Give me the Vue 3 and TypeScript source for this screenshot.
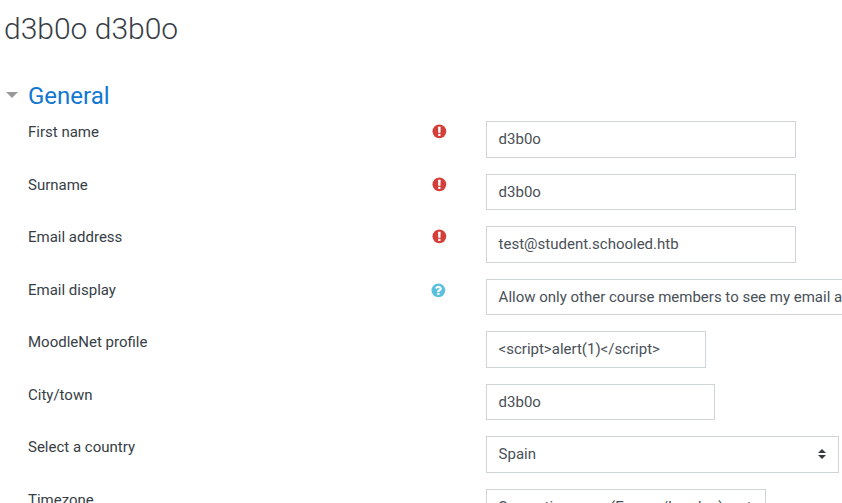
<script setup lang="ts">
interface Field {
  label: string
  value: string
  kind: 'text' | 'select'
  width: number
  mark?: 'required' | 'help'
}

const fields: Field[] = [
  { label: 'First name', value: 'd3b0o', kind: 'text', width: 310, mark: 'required' },
  { label: 'Surname', value: 'd3b0o', kind: 'text', width: 310, mark: 'required' },
  { label: 'Email address', value: 'test@student.schooled.htb', kind: 'text', width: 310, mark: 'required' },
  { label: 'Email display', value: 'Allow only other course members to see my email address', kind: 'select', width: 440, mark: 'help' },
  { label: 'MoodleNet profile', value: '<' + 'script>alert(1)<' + '/script>', kind: 'text', width: 220 },
  { label: 'City/town', value: 'd3b0o', kind: 'text', width: 229 },
  { label: 'Select a country', value: 'Spain', kind: 'select', width: 353 },
  { label: 'Timezone', value: 'Server timezone (Europe/London)', kind: 'select', width: 280 },
]
</script>

<template>
  <main class="page">
    <h1>d3b0o d3b0o</h1>
    <h2><span class="caret"></span>General</h2>
    <div v-for="f in fields" :key="f.label" class="row">
      <label>{{ f.label }}</label>
      <span class="mark">
        <svg v-if="f.mark === 'required'" class="required" viewBox="-56 -56 1792 1792">
          <circle cx="768" cy="768" r="768" fill="#d43f3a" />
          <path d="M896 1247v-190q0-14-9-23.5t-22-9.500H673q-13 0-23 10t-10 23v190q0 13 10 23t23 10h192q13 0 22-9.500t9-23.500zM894 903l18-621q0-12-10-18-10-8-24-8H658q-14 0-24 8-10 6-10 18l17 621q0 10 10 17.500t24 7.500h185q14 0 23.500-7.500T894 903z" fill="#fff" />
        </svg>
        <svg v-if="f.mark === 'help'" class="help" viewBox="-56 -56 1792 1792">
          <circle cx="768" cy="768" r="768" fill="#5bc0de" />
          <path d="M896 1248v-192q0-14-9-23t-23-9H672q-14 0-23 9t-9 23v192q0 14 9 23t23 9h192q14 0 23-9t9-23zm256-672q0-88-55.500-163T958 297t-170-41q-243 0-371 213-15 24 8 42l132 100q7 6 19 6 16 0 25-12 53-68 86-92 34-24 86-24 48 0 85.500 26t37.500 59q0 38-20 61t-68 45q-63 28-115.500 86.500T640 892v36q0 14 9 23t23 9h192q14 0 23-9t9-23q0-19 21.500-49.500T972 829q32-18 49-28.500t46-35 44.500-48 28-60.500 12.500-81z" fill="#fff" />
        </svg>
      </span>
      <div class="control" :style="{ width: f.width + 'px' }">
        <span class="value">{{ f.value }}</span>
        <svg v-if="f.kind === 'select'" class="arrows" viewBox="0 0 8 10">
          <path d="M4 0l4 4H0zM0 6h8l-4 4z" fill="#343a40" />
        </svg>
      </div>
    </div>
  </main>
</template>

<style>
body { overflow: hidden; }
</style>

<style scoped>
.page {
  box-sizing: border-box;
  width: 842px;
  height: 503px;
  overflow: hidden;
  padding: 11px 0 0 4px;
  background: #fff;
  color: #373e46;
  font: 400 15px/22.5px Roboto, sans-serif;
}
h1 { margin: 0; font-size: 30px; font-weight: 300; line-height: 36px; }
h2 {
  display: flex;
  align-items: center;
  margin: 35px 0 11px;
  color: #1177d1;
  font-size: 24px;
  font-weight: 400;
  line-height: 28px;
}
.caret {
  width: 0;
  margin: 0 10px 2px 2px;
  border: 6px solid transparent;
  border-top-color: #999;
  border-bottom: 0;
}
.row { display: flex; height: 36.5px; margin-bottom: 16px; }
label { flex: none; width: 404px; padding-left: 24px; box-sizing: border-box; }
.mark { width: 78px; flex: none; padding-left: 24px; box-sizing: border-box; }
.mark svg { display: block; width: 16px; height: 16px; margin-top: 3px; overflow: visible; }
.mark .help { margin-left: -1px; margin-top: 4px; }
.control {
  display: flex;
  flex: none;
  align-items: center;
  box-sizing: border-box;
  padding: 0 12px 0 11.6px;
  border: 1px solid #ced4da;
  color: #495057;
  white-space: nowrap;
}
.value { flex: 1; }
.arrows { width: 8px; height: 10px; }
</style>
